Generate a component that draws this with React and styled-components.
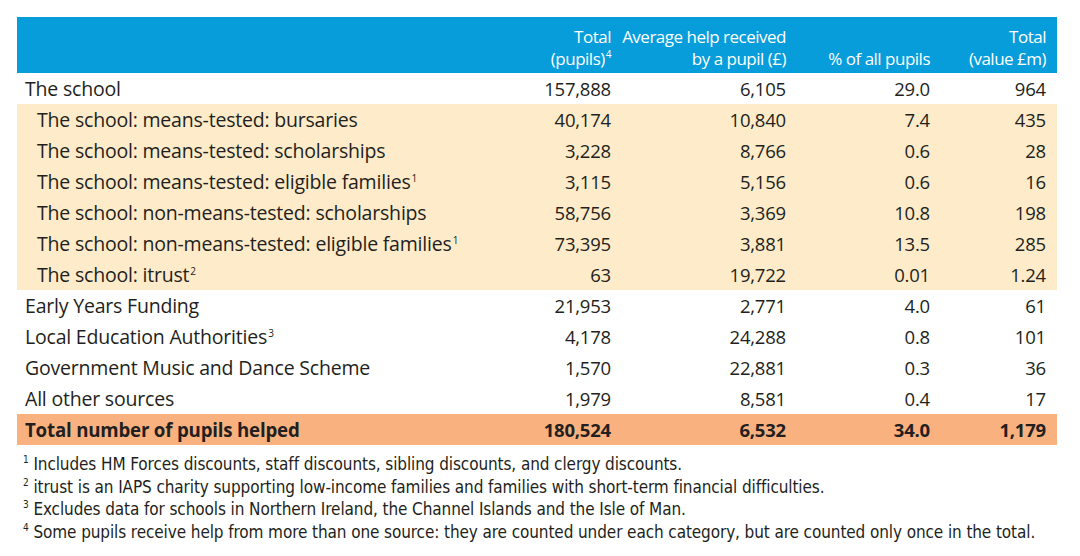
import React from "react";
import styled, { createGlobalStyle } from "styled-components";

const rows = [
  { label: "The school", values: ["157,888", "6,105", "29.0", "964"], kind: "plain" },
  { label: "The school: means-tested: bursaries", values: ["40,174", "10,840", "7.4", "435"], kind: "sub" },
  { label: "The school: means-tested: scholarships", values: ["3,228", "8,766", "0.6", "28"], kind: "sub" },
  { label: "The school: means-tested: eligible families", note: "1", values: ["3,115", "5,156", "0.6", "16"], kind: "sub" },
  { label: "The school: non-means-tested: scholarships", values: ["58,756", "3,369", "10.8", "198"], kind: "sub" },
  { label: "The school: non-means-tested: eligible families", note: "1", values: ["73,395", "3,881", "13.5", "285"], kind: "sub" },
  { label: "The school: itrust", note: "2", values: ["63", "19,722", "0.01", "1.24"], kind: "sub" },
  { label: "Early Years Funding", values: ["21,953", "2,771", "4.0", "61"], kind: "plain" },
  { label: "Local Education Authorities", note: "3", values: ["4,178", "24,288", "0.8", "101"], kind: "plain" },
  { label: "Government Music and Dance Scheme", values: ["1,570", "22,881", "0.3", "36"], kind: "plain" },
  { label: "All other sources", values: ["1,979", "8,581", "0.4", "17"], kind: "plain" },
  { label: "Total number of pupils helped", values: ["180,524", "6,532", "34.0", "1,179"], kind: "total" },
];

const notes = [
  ["1", "Includes HM Forces discounts, staff discounts, sibling discounts, and clergy discounts."],
  ["2", "itrust is an IAPS charity supporting low-income families and families with short-term financial difficulties."],
  ["3", "Excludes data for schools in Northern Ireland, the Channel Islands and the Isle of Man."],
  ["4", "Some pupils receive help from more than one source: they are counted under each category, but are counted only once in the total."],
];

const GlobalStyle = createGlobalStyle`
  html, body { margin: 0; background: #ffffff; }
  body { font-family: "Open Sans", "Liberation Sans", sans-serif; color: #231f20; }
`;

const Page = styled.div`
  width: 1080px;
  height: 556px;
  padding: 17px 23px 0 17px;
  box-sizing: border-box;
`;

const Table = styled.table`
  width: 1040px;
  border-collapse: collapse;
  table-layout: fixed;
`;

const Head = styled.th`
  background: #079ddb;
  color: #ffffff;
  font-weight: normal;
  font-size: 17px;
  line-height: 22px;
  text-align: right;
  vertical-align: bottom;
  padding: 9px 11px 3px 0;
  height: 44px;
  white-space: nowrap;
  letter-spacing: -0.5px;
`;

const bg = { plain: "#ffffff", sub: "#fdebc9", total: "#f9b27f" };

const Row = styled.tr`
  background: ${({ $kind }) => bg[$kind]};
  font-weight: ${({ $kind }) => ($kind === "total" ? 700 : 400)};
`;

const Label = styled.td`
  font-size: ${({ $kind }) => ($kind === "total" ? 18.7 : 19.5)}px;
  height: 31px;
  padding: 0 0 0 ${({ $kind }) => ($kind === "sub" ? 20 : 8)}px;
  white-space: nowrap;
  letter-spacing: -0.2px;
`;

const Num = styled.td`
  font-size: 18.5px;
  height: 31px;
  padding: 0 11px 0 0;
  text-align: right;
  white-space: nowrap;
  letter-spacing: -0.2px;
`;

const Sup = styled.sup`
  font-size: 10px;
  vertical-align: 7px;
  line-height: 0;
  margin-left: 1px;
`;

const Notes = styled.div`
  margin-top: 8px;
  padding-left: 5px;
  font-family: "Liberation Sans Narrow", "DejaVu Sans Condensed", "Liberation Sans", sans-serif;
  font-size: 17px;
  line-height: 22.5px;
  white-space: nowrap;
  letter-spacing: -0.1px;
`;

const NoteLine = styled.div``;

export default function App() {
  return (
    <Page>
      <GlobalStyle />
      <Table>
        <colgroup>
          <col style={{ width: 523 }} />
          <col style={{ width: 82 }} />
          <col style={{ width: 175 }} />
          <col style={{ width: 144 }} />
          <col style={{ width: 116 }} />
        </colgroup>
        <thead>
          <tr>
            <Head />
            <Head>
              Total
              <br />
              (pupils)<Sup>4</Sup>
            </Head>
            <Head>
              Average help received
              <br />
              by a pupil (£)
            </Head>
            <Head>% of all pupils</Head>
            <Head>
              Total
              <br />
              (value £m)
            </Head>
          </tr>
        </thead>
        <tbody>
          {rows.map((r) => (
            <Row key={r.label} $kind={r.kind}>
              <Label $kind={r.kind}>
                {r.label}
                {r.note && <Sup>{r.note}</Sup>}
              </Label>
              {r.values.map((v, i) => (
                <Num key={i}>{v}</Num>
              ))}
            </Row>
          ))}
        </tbody>
      </Table>
      <Notes>
        {notes.map(([n, t]) => (
          <NoteLine key={n}>
            <Sup>{n}</Sup> {t}
          </NoteLine>
        ))}
      </Notes>
    </Page>
  );
}
